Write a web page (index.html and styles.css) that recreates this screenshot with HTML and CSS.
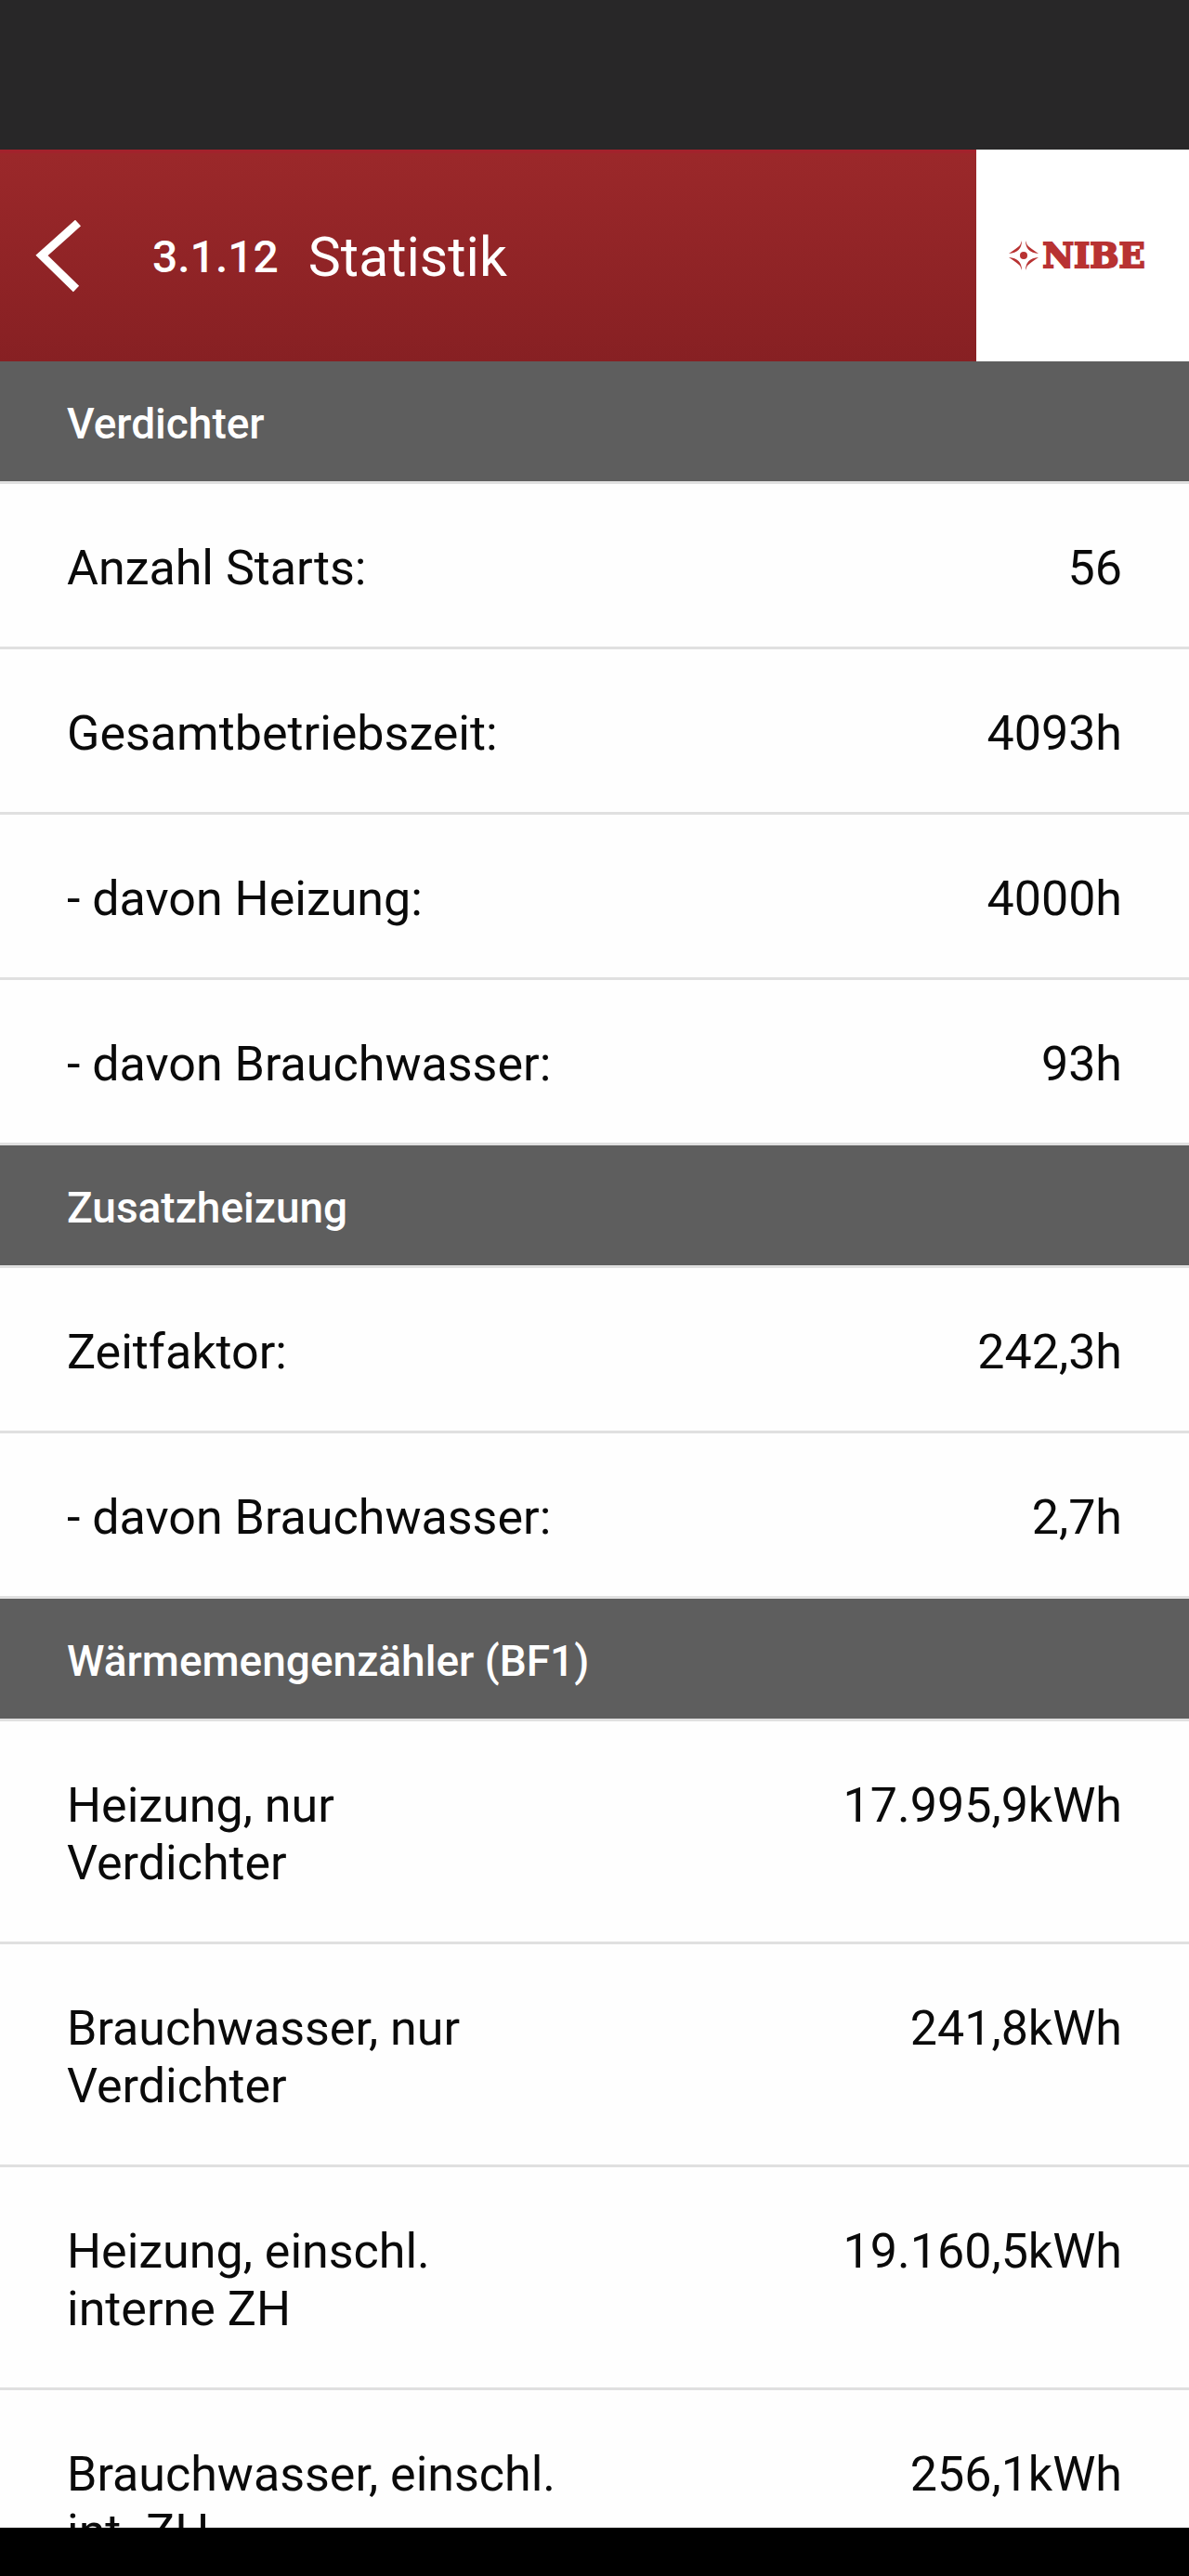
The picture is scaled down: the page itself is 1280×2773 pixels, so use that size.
FILE: index.html
```
<!DOCTYPE html>
<html lang="de">
<head>
    <meta charset="UTF-8">
    <meta name="viewport" content="width=device-width, initial-scale=1.0">
    <title>3.1.12 Statistik</title>
    <link rel="stylesheet" href="styles.css">
</head>
<body>
    <div class="status-bar"></div>

    <header class="header">
        <button class="back" type="button" aria-label="Zurück">
            <svg width="50" height="80" viewBox="0 0 50 80">
                <path d="M46 3 L7 38 L44 74" fill="none" stroke="#fff" stroke-width="9"/>
            </svg>
        </button>
        <span class="menu-number">3.1.12</span>
        <h1>Statistik</h1>
        <div class="logo">
            <svg width="32" height="32" viewBox="0 0 32 32" fill="#b83232">
                <circle cx="16" cy="16" r="4"/>
                <path d="M14 0 Q14 13 0 14 Q9 8 12 5 Q13 3 14 0z"/>
                <path d="M18 0 Q18 13 32 14 Q23 8 20 5 Q19 3 18 0z"/>
                <path d="M14 32 Q14 19 0 18 Q9 24 12 27 Q13 29 14 32z"/>
                <path d="M18 32 Q18 19 32 18 Q23 24 20 27 Q19 29 18 32z"/>
            </svg>
            <span>NIBE</span>
        </div>
    </header>

    <main class="content">
        <h2>Verdichter</h2>
        <table>
            <tr><th scope="row">Anzahl Starts:</th><td>56</td></tr>
            <tr><th scope="row">Gesamtbetriebszeit:</th><td>4093h</td></tr>
            <tr><th scope="row">- davon Heizung:</th><td>4000h</td></tr>
            <tr><th scope="row">- davon Brauchwasser:</th><td>93h</td></tr>
        </table>

        <h2>Zusatzheizung</h2>
        <table>
            <tr><th scope="row">Zeitfaktor:</th><td>242,3h</td></tr>
            <tr><th scope="row">- davon Brauchwasser:</th><td>2,7h</td></tr>
        </table>

        <h2>Wärmemengenzähler (BF1)</h2>
        <table>
            <tr><th scope="row">Heizung, nur Verdichter</th><td>17.995,9kWh</td></tr>
            <tr><th scope="row">Brauchwasser, nur Verdichter</th><td>241,8kWh</td></tr>
            <tr><th scope="row">Heizung, einschl. interne ZH</th><td>19.160,5kWh</td></tr>
            <tr><th scope="row">Brauchwasser, einschl. int. ZH</th><td>256,1kWh</td></tr>
        </table>
    </main>

    <div class="nav-bar"></div>
</body>
</html>
```
FILE: styles.css
```
* {
    box-sizing: border-box;
}
body {
    display: flex;
    flex-direction: column;
    height: 100vh;
    margin: 0;
    background-color: #fefefe;
    color: #0a0a0a;
    font-family: Roboto, sans-serif;
    font-size: 52px;
    line-height: 62px;
}
.status-bar {
    flex: none;
    height: 161px;
    background-color: #282728;
}
.nav-bar {
    flex: none;
    height: 52px;
    background-color: #000;
}

/* Header */
.header {
    display: flex;
    flex: none;
    align-items: center;
    height: 228px;
    border-top: 4px solid #a2222c;
    background: linear-gradient(#9b282a, #872023);
    color: #fff;
}
.back {
    display: flex;
    padding: 0 36px 0 38px;
    border: none;
    background: none;
    cursor: pointer;
}
.menu-number {
    margin-left: 40px;
    font-size: 48px;
    font-weight: 500;
}
h1 {
    margin: 0 0 0 32px;
    font-size: 59px;
    font-weight: 400;
}
.logo {
    display: flex;
    align-items: center;
    justify-content: center;
    gap: 4px;
    width: 229px;
    height: 228px;
    margin: -4px 0 0 auto;
    padding-right: 12px;
    background-color: #fff;
    color: #b83232;
    font-family: "DejaVu Serif", serif;
    font-size: 37px;
    font-weight: 700;
    -webkit-text-stroke: 2px #b83232;
}

/* Statistics list */
.content {
    flex: 1;
    min-height: 0;
    overflow: hidden;
}
h2 {
    margin: 0;
    padding: 36px 72px 31px;
    border-bottom: 3px solid #e0e0e0;
    background-color: #5e5e5e;
    background-clip: padding-box;
    color: #fff;
    font-size: 46px;
    font-weight: 500;
}
table {
    width: 100%;
    border-spacing: 0;
}
th, td {
    padding: 60px 0 53px;
    border-bottom: 3px solid #e0e0e0;
    font-weight: 400;
    vertical-align: top;
}
th {
    width: 47%;
    padding-left: 72px;
    text-align: left;
}
td {
    padding-right: 72px;
    text-align: right;
}
```
